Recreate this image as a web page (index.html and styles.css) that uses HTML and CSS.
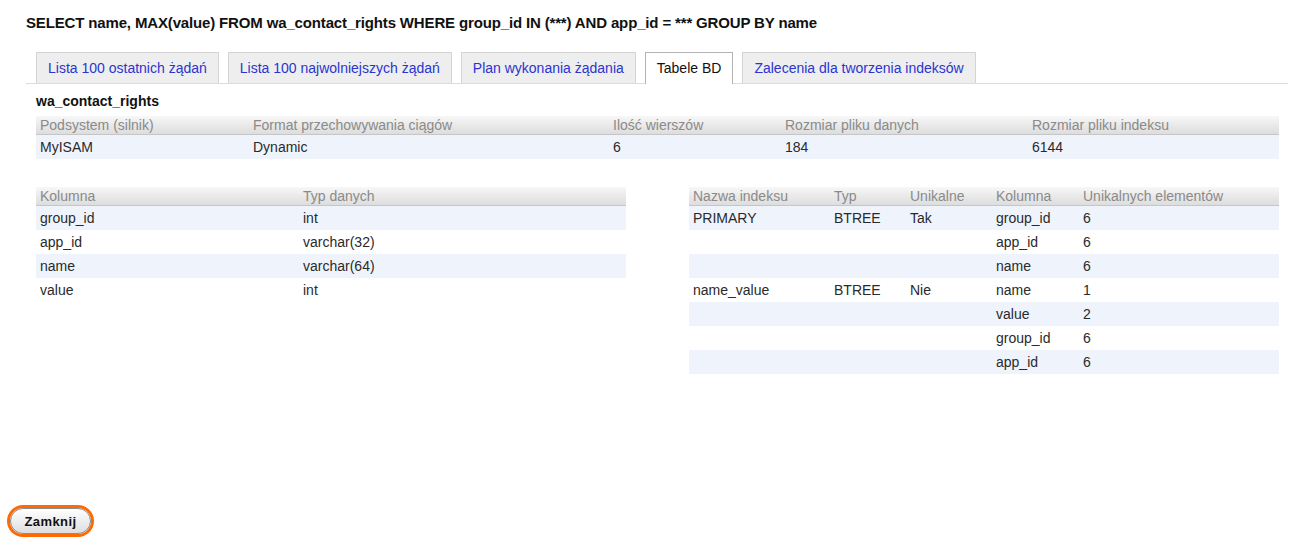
FILE: index.html
```html
<!DOCTYPE html>
<html lang="pl">
<head>
<meta charset="utf-8">
<title>Tabele BD</title>
<link rel="stylesheet" href="styles.css">
</head>
<body>
<div class="page">
  <h1 class="query">SELECT name, MAX(value) FROM wa_contact_rights WHERE group_id IN (***) AND app_id = *** GROUP BY name</h1>
  <div class="tabs">
    <a class="tab" href="#">Lista 100 ostatnich żądań</a>
    <a class="tab" href="#">Lista 100 najwolniejszych żądań</a>
    <a class="tab" href="#">Plan wykonania żądania</a>
    <a class="tab active" href="#">Tabele BD</a>
    <a class="tab" href="#">Zalecenia dla tworzenia indeksów</a>
  </div>
  <div class="panel">
    <h2 class="tname">wa_contact_rights</h2>
    <table class="grid">
      <colgroup><col class="w213"><col class="w360"><col class="w172"><col class="w247"><col></colgroup>
      <thead><tr><th>Podsystem (silnik)</th><th>Format przechowywania ciągów</th><th>Ilość wierszów</th><th>Rozmiar pliku danych</th><th>Rozmiar pliku indeksu</th></tr></thead>
      <tbody><tr><td>MyISAM</td><td>Dynamic</td><td>6</td><td>184</td><td>6144</td></tr></tbody>
    </table>
    <div class="pair">
      <table class="grid">
        <colgroup><col class="w263"><col></colgroup>
        <thead><tr><th>Kolumna</th><th>Typ danych</th></tr></thead>
        <tbody>
          <tr><td>group_id</td><td>int</td></tr>
          <tr><td>app_id</td><td>varchar(32)</td></tr>
          <tr><td>name</td><td>varchar(64)</td></tr>
          <tr><td>value</td><td>int</td></tr>
        </tbody>
      </table>
      <table class="grid">
        <colgroup><col class="w141"><col class="w76"><col class="w86"><col class="w87"><col></colgroup>
        <thead><tr><th>Nazwa indeksu</th><th>Typ</th><th>Unikalne</th><th>Kolumna</th><th>Unikalnych elementów</th></tr></thead>
        <tbody>
          <tr><td>PRIMARY</td><td>BTREE</td><td>Tak</td><td>group_id</td><td>6</td></tr>
          <tr><td></td><td></td><td></td><td>app_id</td><td>6</td></tr>
          <tr><td></td><td></td><td></td><td>name</td><td>6</td></tr>
          <tr><td>name_value</td><td>BTREE</td><td>Nie</td><td>name</td><td>1</td></tr>
          <tr><td></td><td></td><td></td><td>value</td><td>2</td></tr>
          <tr><td></td><td></td><td></td><td>group_id</td><td>6</td></tr>
          <tr><td></td><td></td><td></td><td>app_id</td><td>6</td></tr>
        </tbody>
      </table>
    </div>
  </div>
  <div class="footer">
    <button class="btn" type="button">Zamknij</button>
  </div>
</div>
</body>
</html>
```

FILE: styles.css
```css
html, body {
  margin: 0;
  padding: 0;
  background: #fff;
}
body {
  font-family: "Liberation Sans", Arial, sans-serif;
  font-size: 14px;
  color: #222;
}
.page {
  display: flex;
  flex-direction: column;
  height: 544px;
  box-sizing: border-box;
}
.query {
  margin: 0;
  padding: 15px 0 0 26px;
  font-size: 15px;
  letter-spacing: -0.15px;
  line-height: 16px;
  font-weight: bold;
  color: #111;
}
.tabs {
  display: flex;
  gap: 9px;
  margin: 21px 10px 0 26px;
  padding-left: 10px;
  border-bottom: 1px solid #dcdcdc;
}
.tab {
  display: block;
  height: 30px;
  line-height: 30px;
  padding: 0 11px;
  border: 1px solid #d4d4d4;
  border-bottom: none;
  background: #eeeeee;
  color: #2a35d0;
  text-decoration: none;
  font-size: 14px;
}
.tab.active {
  background: #fff;
  color: #111;
  border-color: #b4b4b4;
  height: 31px;
  margin-bottom: -1px;
}
.panel {
  margin: 0 19px 0 36px;
}
.tname {
  margin: 9px 0 7px;
  font-size: 14px;
  line-height: 16px;
  font-weight: bold;
  color: #111;
}
.grid {
  width: 100%;
  border-collapse: collapse;
  table-layout: fixed;
}
.grid th {
  height: 18px;
  padding: 0 4px;
  text-align: left;
  font-weight: normal;
  color: #8a8a8a;
  font-size: 14px;
  line-height: 18px;
  background: linear-gradient(#f7f7f7, #dddddd);
  border-bottom: 1px solid #c6c6c6;
  white-space: nowrap;
}
.grid td {
  height: 24px;
  padding: 0 4px;
  font-size: 14px;
  color: #2a2a2a;
  white-space: nowrap;
}
.grid tbody tr:nth-child(odd) {
  background: #eff4fc;
}
.w213 { width: 213px; }
.w360 { width: 360px; }
.w172 { width: 172px; }
.w247 { width: 247px; }
.w263 { width: 263px; }
.w141 { width: 141px; }
.w76 { width: 76px; }
.w86 { width: 86px; }
.w87 { width: 87px; }
.pair {
  display: grid;
  grid-template-columns: 590px 590px;
  justify-content: space-between;
  align-items: start;
  margin-top: 28px;
}
.footer {
  margin-top: auto;
  padding: 0 0 10px 10px;
}
.btn {
  display: block;
  width: 81px;
  height: 26px;
  padding: 0;
  border: 1px solid #8c8c8c;
  border-radius: 13px;
  background: linear-gradient(#ffffff, #dedede);
  box-shadow: 0 0 0 3px #ff6a00;
  font-family: "Liberation Sans", Arial, sans-serif;
  font-size: 13px;
  font-weight: bold;
  letter-spacing: 0.4px;
  color: #111;
}
```
